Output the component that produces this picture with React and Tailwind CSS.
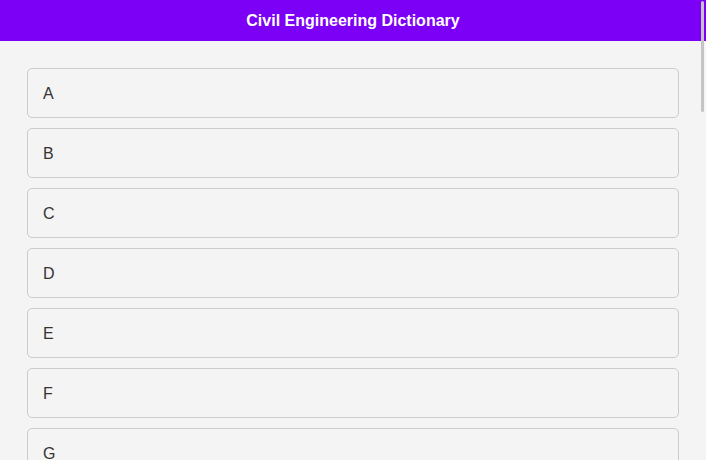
export default function App() {
  const letters = "ABCDEFGHIJKLMNOPQRSTUVWXYZ".split("");
  return (
    <div className="min-h-screen bg-[#f4f4f4] font-['Liberation_Sans',Arial,sans-serif]">
      <header className="h-[41px] bg-[#7b00f5] flex items-center justify-center">
        <h1 className="text-white text-base font-bold">Civil Engineering Dictionary</h1>
      </header>
      <div className="px-[27px] pt-[27px] pb-[27px] flex flex-col gap-[10px]">
        {letters.map((l) => (
          <div
            key={l}
            className="h-[50px] border border-[#cccccc] rounded-[5px] bg-[#f4f4f4] flex items-center px-[15px] pt-[2px] text-base text-[#333333]"
          >
            {l}
          </div>
        ))}
      </div>
      <div className="fixed right-[2px] top-[1px] w-[3px] h-[111px] rounded-full bg-[#c4c4c4]" />
    </div>
  );
}
